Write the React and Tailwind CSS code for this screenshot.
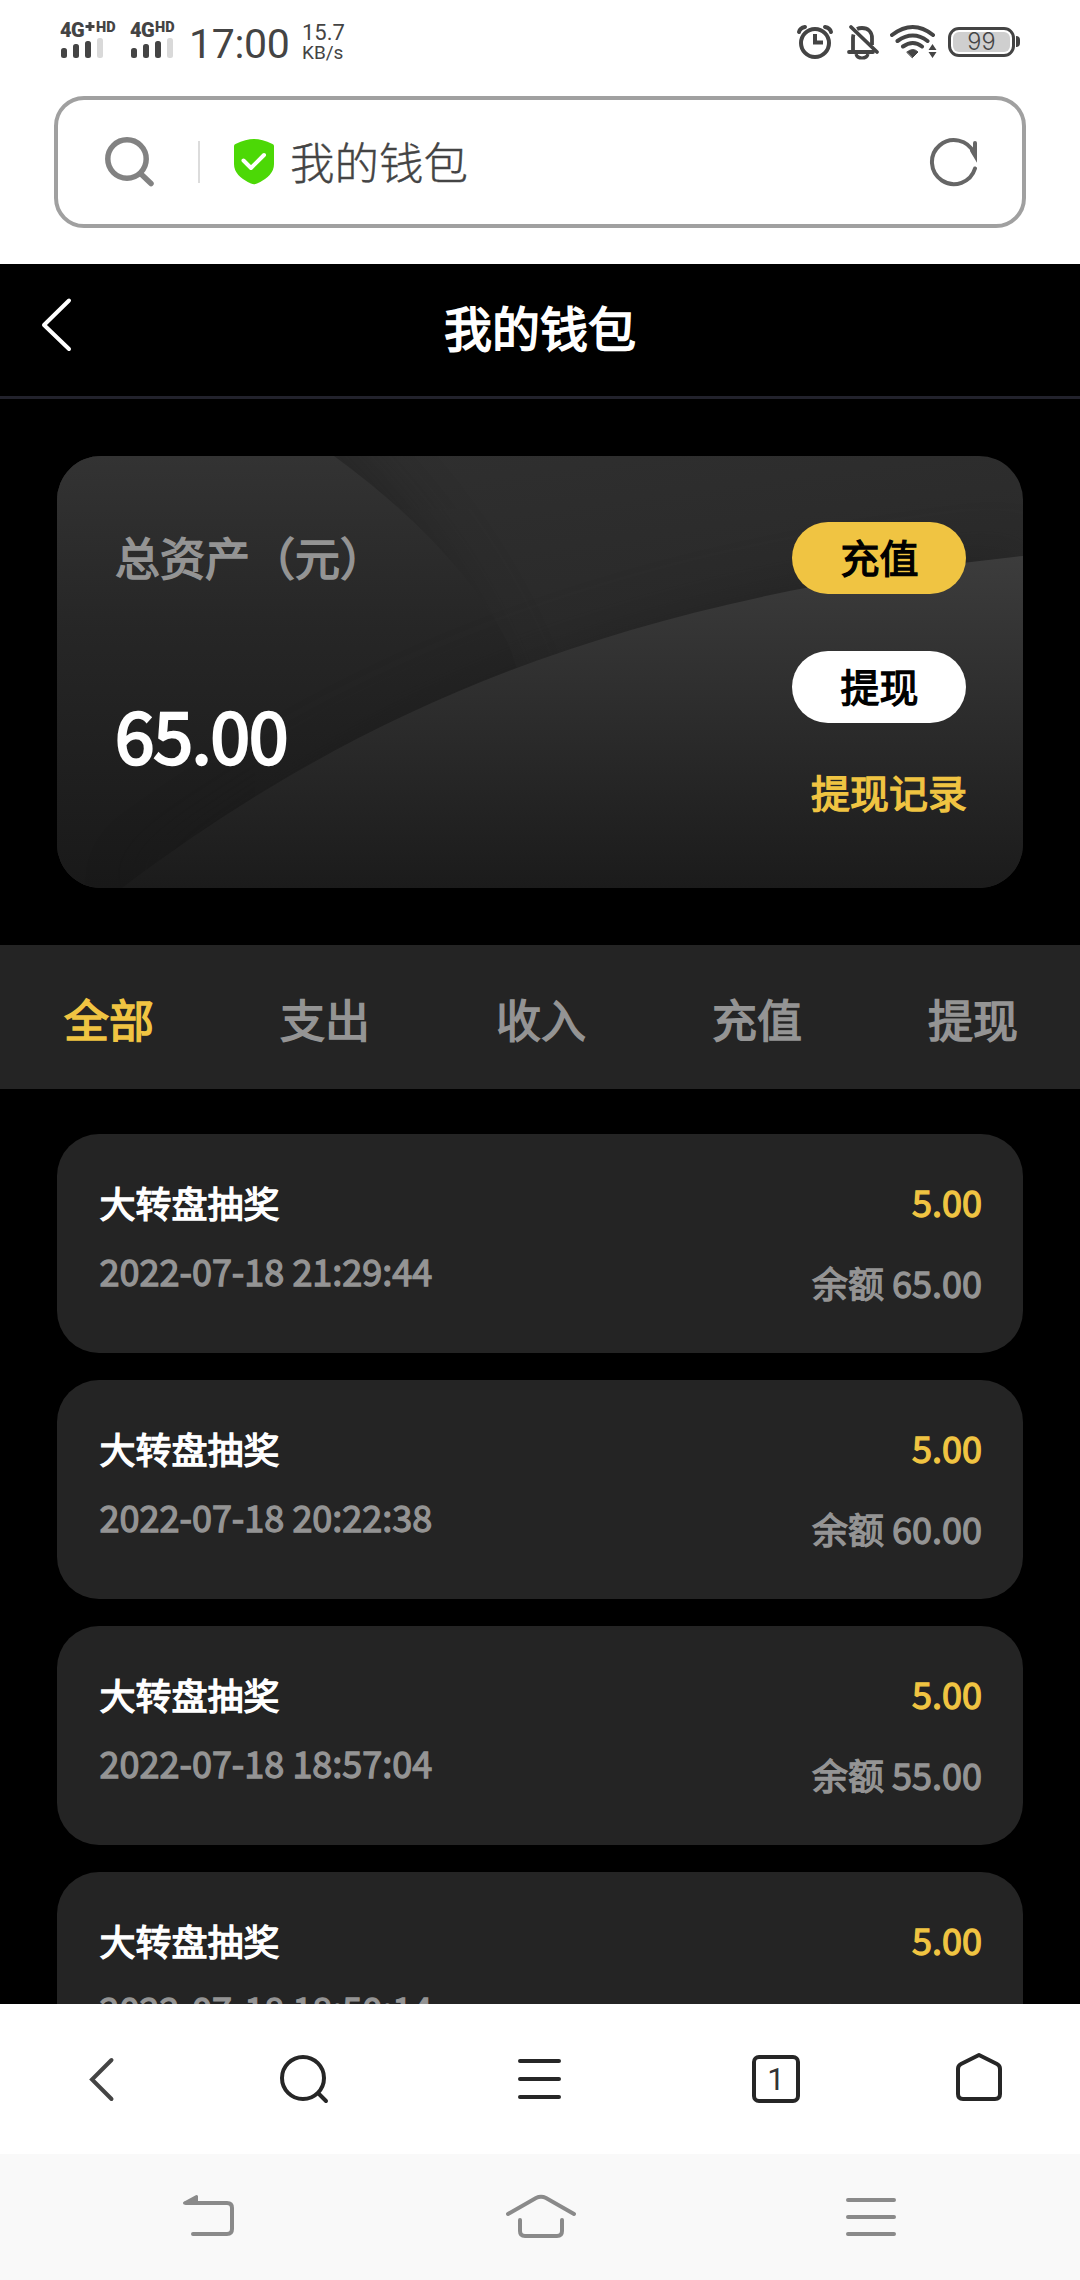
const tabs = ["全部", "支出", "收入", "充值", "提现"];

const records = [
    { id: 1, title: "大转盘抽奖", time: "2022-07-18 21:29:44", amount: "5.00", balance: "65.00" },
    { id: 2, title: "大转盘抽奖", time: "2022-07-18 20:22:38", amount: "5.00", balance: "60.00" },
    { id: 3, title: "大转盘抽奖", time: "2022-07-18 18:57:04", amount: "5.00", balance: "55.00" },
    { id: 4, title: "大转盘抽奖", time: "2022-07-18 18:50:14", amount: "5.00", balance: "50.00" },
];

function Signal({ plus }) {
    return (
        <div className="flex h-[40px] flex-col font-[Roboto] leading-none font-black text-[#444]">
            <div className="flex h-[18px] items-start whitespace-nowrap">
                <span className="w-[25px] text-[20px] leading-[20px] tracking-[-0.5px]">4G</span>
                {plus && (
                    <svg className="mt-px mr-px" width="10" height="12" viewBox="0 0 10 12" stroke="#444" strokeWidth="3">
                        <path d="M5 1v9M.500 5.500h9" />
                    </svg>
                )}
                <span className="text-[14.5px] leading-[15px]">HD</span>
            </div>
            <svg width="46" height="20" viewBox="0 17 46 20" fill="#444">
                <rect x="1" y="27" width="6" height="10" rx="2.500" />
                <rect x="13" y="23" width="6" height="14" rx="2.500" />
                <rect x="25" y="20" width="6" height="17" rx="2.500" />
                <rect x="37" y="17" width="6" height="20" rx="2.500" fill="#d9d9d9" />
            </svg>
        </div>
    );
}

function StatusBar() {
    return (
        <div className="flex h-[84px] items-start justify-between pr-[60px] pl-[60px] font-normal text-[#444]">
            <div className="flex">
                <div className="mt-[20px] grid w-[129px] grid-cols-[70px_59px]">
                    <Signal plus />
                    <Signal />
                </div>
                <div className="mt-[21px] w-[113px] font-[Roboto] text-[41px] leading-[46px] tracking-[-0.3px]">17:00</div>
                <div className="mt-[23px] font-[Roboto] text-[22px] leading-[20px]">
                    <div>15.7</div>
                    <div className="text-[19px]">KB/s</div>
                </div>
            </div>

            <div className="mt-[22px] flex">
                <svg width="50" height="40" viewBox="796 22 50 40" fill="none" stroke="#444" strokeWidth="4">
                    <circle cx="815" cy="43" r="14" />
                    <path d="M815 34v8.500h8" />
                    <path d="M799 32q1-4 6-5M831 32q-1-4-6-5" strokeLinecap="round" />
                </svg>
                <svg width="44" height="40" viewBox="846 22 44 40" fill="none" stroke="#444" strokeWidth="3.800">
                    <path d="M849 52h24" strokeLinecap="round" />
                    <path d="M853 52V38q0-2 .5-3.500M857 29q2-1 5-1c6 0 10 4 10 10v7" />
                    <path d="M856 54q1 4 6 4t6-4" strokeWidth="3.200" />
                    <path d="M851 27l26 25" strokeLinecap="round" />
                </svg>
                <svg width="58" height="40" viewBox="890 22 58 40" fill="none" stroke="#444" strokeWidth="4" strokeLinecap="round">
                    <path d="M892 35q21-16 41 0M897.500 41q15.500-11 30 0M903 46.500q10-7 19 0" />
                    <path d="M907 52q6-5 11 0l-5.500 5.500z" fill="#444" strokeWidth="1" />
                    <path d="M928.500 50l4-6 4 6zM928.500 52l4 6 4-6z" fill="#444" stroke="none" />
                </svg>
                <div className="mt-[4.500px] flex h-[30px] items-center">
                    <div className="h-[30px] w-[67px] rounded-[11px] border-[3px] border-[#444] p-[2px]">
                        <div className="flex h-full items-center justify-center rounded-[6px] bg-[#cfcfcf] font-[Inter] text-[23.5px] leading-[20px] font-light">99</div>
                    </div>
                    <div className="ml-px h-[11px] w-[4px] rounded-r-full bg-[#444]" />
                </div>
            </div>
        </div>
    );
}

function AddressBar() {
    return (
        <div className="mx-[54px] mt-3 flex h-[132px] items-center rounded-[30px] border-4 border-[#a0a0a0] pr-[42px] pl-[44px]">
            <svg width="56" height="56" viewBox="102 134 56 56" fill="none" stroke="#828282" strokeWidth="5.500" strokeLinecap="round">
                <circle cx="127" cy="159" r="19.200" />
                <path d="M141 174l10 9.500" />
            </svg>
            <div className="ml-10 h-[42px] w-[2px] bg-[#dcdcdc]" />
            <svg className="ml-[34px]" width="40" height="46" viewBox="0 0 40 46">
                <path d="M20 0Q28 0 38.500 5Q40 5.500 40 7V25Q40 37 23 44.500Q20 46 17 44.500Q0 37 0 25V7Q0 5.500 1.500 5Q12 0 20 0Z" fill="#4cd806" />
                <path d="M9.500 21.500l7.500 7.500L30 16" fill="none" stroke="#fff" strokeWidth="4" strokeLinecap="round" strokeLinejoin="round" />
            </svg>
            <span className="mb-[3px] ml-[16px] text-[44.5px] leading-[64px] font-light text-[#444] [-webkit-text-stroke:0.4px]">我的钱包</span>
            <svg className="ml-auto" width="52" height="52" viewBox="928 136 52 52" fill="none" stroke="#666" strokeWidth="4" strokeLinecap="round">
                <path d="M975 168.500A22 22 0 1 1 974 153" />
                <path d="M975 143v12.500l-3-5" />
            </svg>
        </div>
    );
}

function AssetCard() {
    return (
        <div className="relative mx-[57px] mt-[57px] flex h-[432px] justify-between overflow-hidden rounded-[44px] px-[57px]">
            <svg className="absolute inset-0" width="966" height="432" viewBox="0 0 966 432">
                <defs>
                    <linearGradient id="base" x1="0" y1="0" x2="0" y2="1">
                        <stop offset="0" stopColor="#333" />
                        <stop offset="0.400" stopColor="#262626" />
                        <stop offset="1" stopColor="#191919" />
                    </linearGradient>
                    <linearGradient id="back" x1="0" y1="0" x2="0.300" y2="1">
                        <stop offset="0" stopColor="#303030" />
                        <stop offset="1" stopColor="#242424" />
                    </linearGradient>
                    <linearGradient id="arc" x1="0" y1="0" x2="0" y2="1">
                        <stop offset="0" stopColor="#3c3c3c" />
                        <stop offset="1" stopColor="#1b1b1b" />
                    </linearGradient>
                    <filter id="soft" x="-20%" y="-20%" width="140%" height="140%" colorInterpolationFilters="sRGB">
                        <feGaussianBlur stdDeviation="28" />
                    </filter>
                </defs>
                <rect width="966" height="432" fill="url(#back)" />
                <path d="M-40 -60H235Q410 90 465 270V480H-40Z" fill="#1a1a1a" opacity="0.450" filter="url(#soft)" />
                <path d="M0 0H277Q400 90 450 185Q480 250 470 432H0Z" fill="url(#base)" />
                <path d="M65 432C310 247 570 142 966 100V432Z" fill="#1a1a1a" opacity="0.450" filter="url(#soft)" />
                <path d="M65 432C310 247 570 142 966 100V432Z" fill="url(#arc)" />
            </svg>

            <div className="relative">
                <div className="mt-[69px] ml-px text-[45px] leading-[64px] text-[#949494] [-webkit-text-stroke:0.034em]">总资产（元）</div>
                <div className="mt-[92px] ml-px text-[71px] leading-[104px] tracking-[-1px] text-white [-webkit-text-stroke:0.038em]">65.00</div>
            </div>

            <div className="relative flex flex-col items-end text-[39px] leading-[56px]">
                <button className="mt-[66px] h-[72px] w-[174px] rounded-full bg-[#f0c442] pb-[5px] pl-px text-black [-webkit-text-stroke:0.034em]">充值</button>
                <button className="mt-[57px] h-[72px] w-[174px] rounded-full bg-white pb-[5px] pl-px text-black [-webkit-text-stroke:0.034em]">提现</button>
                <a className="mt-[40px] -mr-px text-[#f0c442] [-webkit-text-stroke:0.034em]">提现记录</a>
            </div>
        </div>
    );
}

function RecordItem({ record }) {
    return (
        <div className="flex h-[219px] shrink-0 justify-between rounded-[42px] bg-[#242424] px-[42px] text-[36px] leading-[52px] [-webkit-text-stroke:1.3px]">
            <div className="ml-[0.500px]">
                <div className="mt-[42px] text-white">{record.title}</div>
                <div className="mt-[16px] text-[#949494]">{record.time}</div>
            </div>
            <div className="-mr-px text-right">
                <div className="mt-[41px] text-[#f0c442]">{record.amount}</div>
                <div className="mt-[29px] text-[#949494]">余额 {record.balance}</div>
            </div>
        </div>
    );
}

function BrowserNav() {
    return (
        <div className="grid h-[150px] grid-cols-[204px_200px_272px_200px_204px] items-center justify-items-center bg-white">
            <svg width="60" height="60" viewBox="72 2049 60 60" fill="none" stroke="#444" strokeWidth="4" strokeLinecap="round">
                <path d="M111.500 2060L92 2079.500L111.500 2099" />
            </svg>
            <svg width="60" height="60" viewBox="274 2049 60 60" fill="none" stroke="#262626" strokeWidth="4" strokeLinecap="round">
                <circle cx="303" cy="2078" r="21" />
                <path d="M318.500 2093.500l7.500 7.500" />
            </svg>
            <svg width="60" height="60" viewBox="510 2049 60 60" stroke="#262626" strokeWidth="4" strokeLinecap="round">
                <path d="M520 2061h39M520 2079h39M520 2097h39" />
            </svg>
            <div className="flex h-[48px] w-[48px] items-center justify-center rounded-[7px] border-4 border-[#262626] font-[Roboto] text-[31px] leading-none font-normal text-[#333]">1</div>
            <svg width="60" height="60" viewBox="948 2049 60 60" fill="none" stroke="#262626" strokeWidth="4" strokeLinejoin="round">
                <path d="M979 2055L997 2064Q1000 2065.500 1000 2069V2094Q1000 2099 995 2099H963Q958 2099 958 2094V2069Q958 2065.500 961 2064Z" />
            </svg>
        </div>
    );
}

function SystemNav() {
    return (
        <div className="grid h-[126px] grid-cols-[414px_254px_412px] items-center justify-items-center bg-[#f9f9f9]">
            <svg width="60" height="60" viewBox="177 2187 60 60" fill="none" stroke="#8a8a8a" strokeWidth="4" strokeLinecap="round">
                <path d="M186 2203H227Q232 2203 232 2208V2229Q232 2234 227 2234H193" />
                <path d="M184.500 2203L196.500 2196.500V2203Z" fill="#8a8a8a" strokeWidth="3" strokeLinejoin="round" />
            </svg>
            <svg width="80" height="60" viewBox="501 2187 80 60" fill="none" stroke="#8a8a8a" strokeWidth="4" strokeLinecap="round">
                <path d="M508 2214L536 2198Q541 2195.500 546 2198L574 2214" />
                <path d="M520 2220V2231Q520 2236 525 2236H557Q562 2236 562 2231V2220" />
            </svg>
            <svg width="60" height="60" viewBox="844 2187 60 60" stroke="#8a8a8a" strokeWidth="4" strokeLinecap="round">
                <path d="M848 2200h46M848 2217h46M848 2234h46" />
            </svg>
        </div>
    );
}

function App() {
    return (
        <div className="flex h-[2280px] w-[1080px] flex-col overflow-hidden bg-white font-['Noto_Sans_CJK_SC',sans-serif]">
            <div className="h-[264px] shrink-0">
                <StatusBar />
                <AddressBar />
            </div>

            <div className="h-[1740px] shrink-0 overflow-hidden bg-black">
                <div className="grid h-[135px] grid-cols-[1fr_auto_1fr] items-center border-b-[3px] border-[#22222c] text-white">
                    <svg className="-mt-[12px] ml-[36px]" width="42" height="60" viewBox="0 0 42 60" fill="none" stroke="#fff" strokeWidth="4" strokeLinecap="round" strokeLinejoin="round">
                        <path d="M33 6.500L8 31L33 55" />
                    </svg>
                    <h1 className="mb-2 text-[48px] leading-[70px] [-webkit-text-stroke:0.034em]">我的钱包</h1>
                </div>

                <AssetCard />

                <div className="mt-[57px] grid h-[144px] grid-cols-5 items-center bg-[#242424] pt-[3px] text-center text-[45px] [-webkit-text-stroke:1.5px]">
                    {tabs.map((tab, i) => (
                        <div key={tab} className={i === 0 ? "pl-[2px] text-[#f0c442]" : "pl-[2px] text-[#949494]"}>
                            {tab}
                        </div>
                    ))}
                </div>

                <div className="mx-[57px] mt-[45px] flex flex-col gap-[27px]">
                    {records.map(record => (
                        <RecordItem key={record.id} record={record} />
                    ))}
                </div>
            </div>

            <BrowserNav />
            <SystemNav />
        </div>
    );
}

export default App;
